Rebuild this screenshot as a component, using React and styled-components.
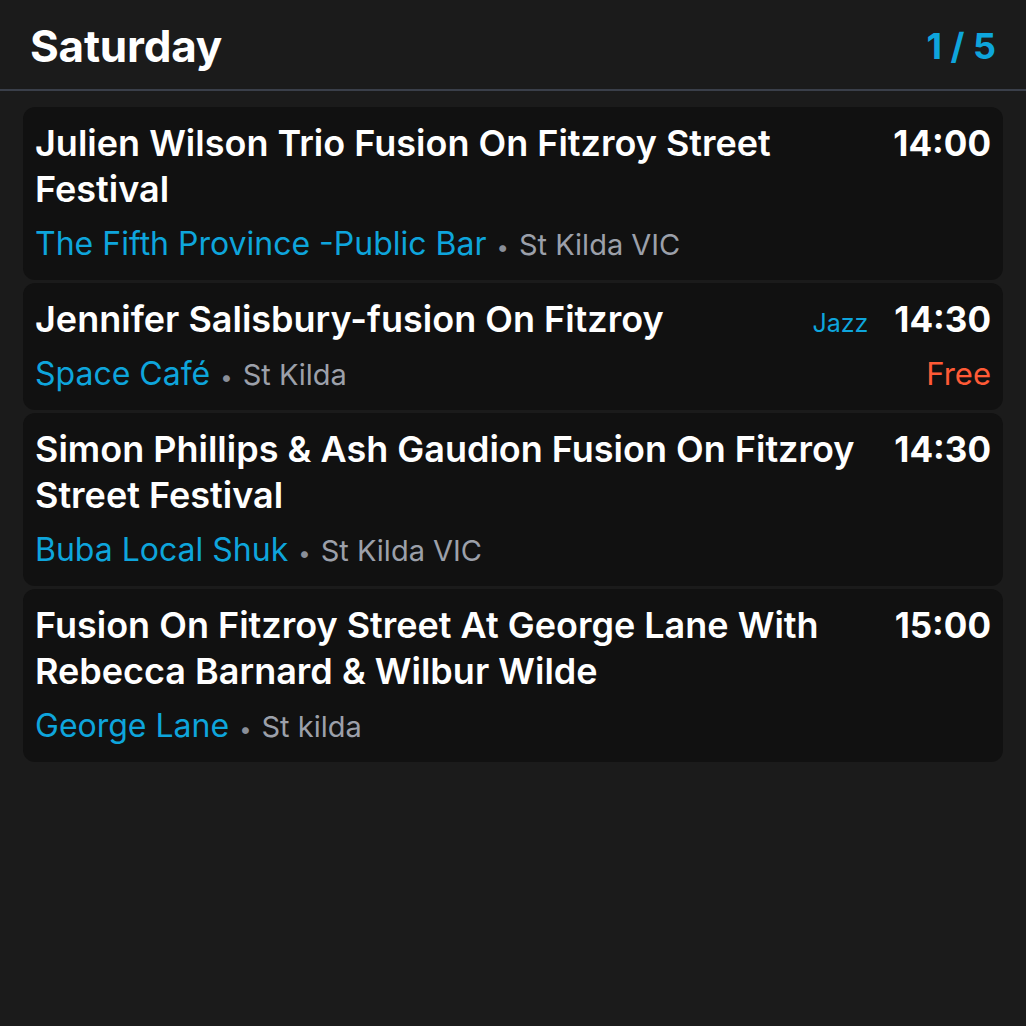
import React from 'react'
import styled, { createGlobalStyle } from 'styled-components'

const GlobalStyle = createGlobalStyle`
  html, body {
    margin: 0;
    padding: 0;
    background: #1b1b1b;
    font-family: Inter, "Noto Sans", sans-serif;
    -webkit-font-smoothing: antialiased;
  }
`

const Page = styled.div`
  width: 1026px;
  min-height: 1026px;
  background: #1b1b1b;
`

const Header = styled.header`
  display: flex;
  align-items: center;
  justify-content: space-between;
  height: 91px;
  padding: 2px 30px 0 30px;
  border-bottom: 2px solid #3a3f4a;
  box-sizing: border-box;
`

const Day = styled.h1`
  margin: 0;
  font-size: 44px;
  font-weight: 700;
  color: #fff;
  letter-spacing: -0.2px;
`

const Pager = styled.span`
  font-size: 36px;
  font-weight: 700;
  color: #0ea5dc;
`

const List = styled.div`
  display: flex;
  flex-direction: column;
  gap: 3px;
  padding: 16px 23px;
`

const Card = styled.div`
  display: flex;
  flex-direction: column;
  gap: 12px;
  background: #111111;
  border-radius: 12px;
  padding: 13px 12px 13px 12px;
`

const Row = styled.div`
  display: flex;
  align-items: flex-start;
  gap: 24px;
`

const Title = styled.div`
  flex: 1;
  font-size: 36px;
  line-height: 46px;
  font-weight: 600;
  color: #fff;
`

const Side = styled.div`
  display: flex;
  align-items: baseline;
  gap: 26px;
  height: 46px;
  line-height: 46px;
`

const Genre = styled.span`
  font-size: 25px;
  line-height: 1;
  color: #0ea5dc;
`

const Time = styled.span`
  font-size: 35px;
  font-weight: 700;
  color: #fff;
`

const Venue = styled.div`
  flex: 1;
  display: flex;
  align-items: baseline;
  gap: 10px;
  line-height: 40px;
`

const Place = styled.span`
  font-size: 32px;
  color: #0ea5dc;
`

const Dot = styled.span`
  font-size: 22px;
  color: #8a8f99;
`

const Suburb = styled.span`
  font-size: 29px;
  color: #9ca0aa;
`

const Price = styled.span`
  font-size: 31px;
  line-height: 40px;
  color: #ff5a36;
`

const events = [
  {
    title: 'Julien Wilson Trio Fusion On Fitzroy Street Festival',
    venue: 'The Fifth Province -Public Bar',
    suburb: 'St Kilda VIC',
    time: '14:00'
  },
  {
    title: 'Jennifer Salisbury-fusion On Fitzroy',
    venue: 'Space Café',
    suburb: 'St Kilda',
    time: '14:30',
    genre: 'Jazz',
    price: 'Free'
  },
  {
    title: 'Simon Phillips & Ash Gaudion Fusion On Fitzroy Street Festival',
    venue: 'Buba Local Shuk',
    suburb: 'St Kilda VIC',
    time: '14:30'
  },
  {
    title: 'Fusion On Fitzroy Street At George Lane With Rebecca Barnard & Wilbur Wilde',
    venue: 'George Lane',
    suburb: 'St kilda',
    time: '15:00'
  }
]

function EventCard({ event }) {
  return (
    <Card>
      <Row>
        <Title>{event.title}</Title>
        <Side>
          {event.genre && <Genre>{event.genre}</Genre>}
          <Time>{event.time}</Time>
        </Side>
      </Row>
      <Row>
        <Venue>
          <Place>{event.venue}</Place>
          <Dot>•</Dot>
          <Suburb>{event.suburb}</Suburb>
        </Venue>
        {event.price && <Price>{event.price}</Price>}
      </Row>
    </Card>
  )
}

export default function App() {
  return (
    <Page>
      <GlobalStyle />
      <Header>
        <Day>Saturday</Day>
        <Pager>1 / 5</Pager>
      </Header>
      <List>
        {events.map((e, i) => (
          <EventCard key={i} event={e} />
        ))}
      </List>
    </Page>
  )
}
